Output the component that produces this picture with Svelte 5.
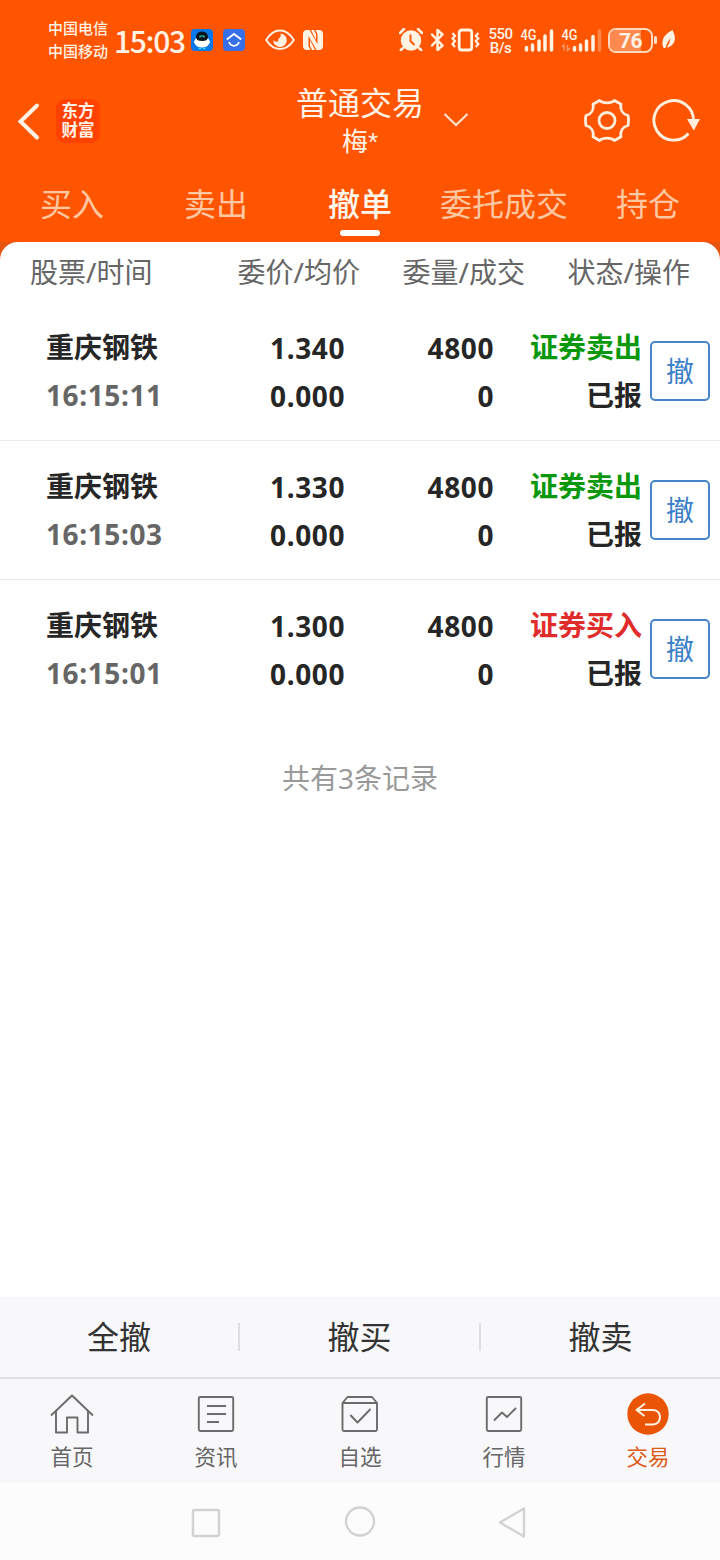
<!--
  Cancel Orders Page

  Pending orders of the trading account, with a cancel button per order
  and the bulk cancel actions above the bottom navigation.
-->

<script lang="ts">
	interface Order {
		name: string;
		time: string;
		price: string;
		average: string;
		amount: number;
		filled: number;
		side: 'buy' | 'sell';
		status: string;
	}

	const tabs = ['买入', '卖出', '撤单', '委托成交', '持仓'];
	const columns = ['股票/时间', '委价/均价', '委量/成交', '状态/操作'];
	const bulkActions = ['全撤', '撤买', '撤卖'];
	const navItems = [
		{ id: 'home', label: '首页' },
		{ id: 'news', label: '资讯' },
		{ id: 'picks', label: '自选' },
		{ id: 'market', label: '行情' },
		{ id: 'trade', label: '交易' }
	];

	let activeTab = $state('撤单');
	let activeNav = $state('trade');
	let orders = $state<Order[]>([
		{ name: '重庆钢铁', time: '16:15:11', price: '1.340', average: '0.000', amount: 4800, filled: 0, side: 'sell', status: '已报' },
		{ name: '重庆钢铁', time: '16:15:03', price: '1.330', average: '0.000', amount: 4800, filled: 0, side: 'sell', status: '已报' },
		{ name: '重庆钢铁', time: '16:15:01', price: '1.300', average: '0.000', amount: 4800, filled: 0, side: 'buy', status: '已报' }
	]);

	function cancel(order: Order) {
		orders = orders.filter((o) => o !== order);
	}
</script>

<div class="page">
	<header>
		<div class="status-bar">
			<div class="carriers"><span>中国电信</span><span>中国移动</span></div>
			<span class="clock">15:03</span>
			<svg class="app-one" width="22" height="22" viewBox="0 0 22 22">
				<rect width="22" height="22" rx="4" fill="#0878e8" />
				<path d="M5 9 2.800 13 4 15Q6 18.500 11 18.500T18 15L19.200 13 17 9Z" fill="#fff" />
				<path d="M5 8.500Q5 2.500 11 2.500T17 8.500Q16.500 12 11 12T5 8.500Z" fill="#08131c" />
				<path d="M9 8.500V7H13V8.500" fill="none" stroke="#35d5c0" stroke-width="1.200" />
				<path d="M7.500 19.500H10.300M11.700 19.500H14.500" stroke="#35d5ef" stroke-width="1.500" />
			</svg>
			<svg class="app-two" width="22" height="22" viewBox="0 0 22 22">
				<rect width="22" height="22" rx="4" fill="#376fe9" />
				<path d="M3.800 10.500 11 5 18.200 10.500M6 13Q7.500 16.800 11 16.800T16 13" fill="none" stroke="#fff" stroke-width="1.800" />
			</svg>
			<svg class="eye" width="30" height="22" viewBox="0 0 30 22">
				<path d="M1.200 11Q7 1.500 15 1.500T28.800 11Q23 20 15 20T1.200 11Z" fill="none" stroke="#fff3e4" stroke-width="2" />
				<path d="M15.500 4.500A6.800 6.800 0 1 1 8.200 11Q10 13.500 12.500 12.500Q14 11.500 13.500 9.500Q16.500 8 15.500 4.500Z" fill="#fff3e4" />
			</svg>
			<svg class="nfc" width="22" height="22" viewBox="0 0 22 22">
				<path d="M5 1H7.500L15.500 15V5L13.500 1H17Q21 1 21 5V17Q21 21 17 21H14.500L6.500 7V17L8.500 21H5Q1 21 1 17V5Q1 1 5 1Z" fill="#fff3e4" />
				<path d="M9 1H12L14 5V11ZM8 11 13 21H10L8 17Z" fill="#fff3e4" />
			</svg>

			<svg class="alarm" width="24" height="24" viewBox="0 0 24 24">
				<circle cx="12" cy="12.500" r="10.200" fill="#fff3e4" />
				<path d="M1 5 5 1M19 1 23 5M4 20 1.800 22M20 20 22.200 22" stroke="#fff3e4" stroke-width="2.500" stroke-linecap="round" />
				<path d="M11.500 6.500V13L15.500 17" fill="none" stroke="#ff5500" stroke-width="1.900" />
			</svg>
			<svg class="bluetooth" width="15" height="24" viewBox="0 0 15 24">
				<path d="M2 6.500 12.500 17.500 7.500 22V2L12.500 6.500 2 17.500" fill="none" stroke="#fff3e4" stroke-width="2.500" stroke-linejoin="round" stroke-linecap="round" />
			</svg>
			<svg class="vibrate" width="29" height="24" viewBox="0 0 29 24">
				<rect x="8.200" y="2" width="12.500" height="20" rx="2.500" fill="none" stroke="#fff3e4" stroke-width="2.800" />
				<path d="M1.500 5 4 8 1.500 10.500 4 13 1.500 16 4 19M27.300 5 24.800 8 27.300 10.500 24.800 13 27.300 16 24.800 19" fill="none" stroke="#fff3e4" stroke-width="2.200" />
			</svg>
			<div class="speed"><span>550</span><span>B/s</span></div>
			<svg class="signal" width="34" height="26" viewBox="0 0 34 26">
				<text x="0.500" y="13" textLength="16" lengthAdjust="spacingAndGlyphs">4G</text>
				<path d="M6.500 23V20.500M12.500 23V18M19 23V14M25 23V9M31.500 23V4" stroke="#fff3e4" stroke-width="3.500" stroke-linecap="round" />
			</svg>
			<svg class="signal signal-two" width="41" height="26" viewBox="0 0 41 26">
				<text x="0.500" y="13" textLength="16" lengthAdjust="spacingAndGlyphs">4G</text>
				<path d="M3 23.500V18L1 20M6.500 18V23.500L9 21" fill="none" stroke="#ff9a66" stroke-width="1.500" />
				<path d="M38.500 23V4" stroke="#ff8848" stroke-width="3.500" stroke-linecap="round" />
				<path d="M13.500 23V20.500M19.500 23V18M25.500 23V14M32 23V9.500" stroke="#fff3e4" stroke-width="3.500" stroke-linecap="round" />
			</svg>
			<div class="battery"><div class="charge" style:width="76%"></div><span>76</span></div>
			<i class="battery-tip"></i>
			<svg class="leaf" width="14" height="20" viewBox="0 0 14 20">
				<path d="M10.500 0Q17 13 6 17.500L5 17Q8 12.500 8.500 8Q5 12 3.500 18L1.500 18Q-3 7 10.500 0Z" fill="#fff3e4" />
			</svg>
		</div>

		<div class="title-bar">
			<div class="title-left">
				<svg width="24" height="40" viewBox="0 0 24 40">
					<path d="M21 4.500 4.500 20.500 21 36.500" fill="none" stroke="#fff3e7" stroke-width="4" stroke-linecap="round" />
				</svg>
				<div class="logo"><span>东方</span><span>财富</span></div>
			</div>
			<div class="title">
				<h1>普通交易</h1>
				<p>梅<span>*</span></p>
			</div>
			<svg class="chevron" width="26" height="16" viewBox="0 0 26 16">
				<path d="M1.500 1 13 12 24.500 1" fill="none" stroke="#ffe7d5" stroke-width="2" />
			</svg>
			<div class="title-right">
				<svg width="46" height="46" viewBox="0 0 46 46" fill="none" stroke="#ffefdf" stroke-width="2.800">
					<path
						d="M15.500 2.500C19 5.700 27 5.700 30.500 2.500L37 6.300C36 11.500 38.500 16 44 17.500Q45 22 44 27.500C38.500 29 36 33.500 37 38.700L30.500 42.500C27 39.300 19 39.300 15.500 42.500L9 38.700C10 33.500 7.500 29 2 27.500Q1 22 2 17.500C7.500 16 10 11.500 9 6.300Z"
						stroke-linejoin="round"
					/>
					<circle cx="23" cy="22.500" r="8" />
				</svg>
				<svg width="48" height="46" viewBox="0 0 48 46">
					<path d="M41.500 22.500A19.800 19.800 0 1 0 36.500 35.500" fill="none" stroke="#ffefdf" stroke-width="2.900" />
					<path d="M35 21H48L41.800 32.500Z" fill="#ffefdf" />
				</svg>
			</div>
		</div>

		<nav class="tabs">
			{#each tabs as tab}
				<button class:active={tab === activeTab} onclick={() => (activeTab = tab)}>{tab}</button>
			{/each}
		</nav>
	</header>

	<main>
		<div class="columns">
			{#each columns as column}
				<span>{column}</span>
			{/each}
		</div>

		{#each orders as order}
			<div class="order">
				<div class="cell name"><span>{order.name}</span><span class="number time">{order.time}</span></div>
				<div class="cell number"><span>{order.price}</span><span>{order.average}</span></div>
				<div class="cell number"><span>{order.amount}</span><span>{order.filled}</span></div>
				<div class="cell">
					<span class={order.side}>{order.side === 'sell' ? '证券卖出' : '证券买入'}</span>
					<span>{order.status}</span>
				</div>
				<button class="cancel" onclick={() => cancel(order)}>撤</button>
			</div>
		{/each}

		<p class="total">共有{orders.length}条记录</p>
	</main>

	<div class="bulk">
		{#each bulkActions as action}
			<button>{action}</button>
		{/each}
	</div>

	<nav class="bottom-nav">
		{#each navItems as item}
			<button class:active={item.id === activeNav} onclick={() => (activeNav = item.id)}>
				<svg width="44" height="44" viewBox="0 0 44 44" fill="none" stroke="#6b6b6b" stroke-width="1.900" stroke-linejoin="round">
					{#if item.id === 'home'}
						<path d="M1 23.500 22 3.500 43 23.500M6 19V40.500H17V25.500H27.500V40.500H38V19" />
					{:else if item.id === 'news'}
						<rect x="4.800" y="5" width="34.400" height="34" rx="1.500" />
						<path d="M13 14H32M13 22H32M13 30H25" />
					{:else if item.id === 'picks'}
						<path d="M4.500 11 9.500 5H34L39 11V37.500Q39 39 37.500 39H6Q4.500 39 4.500 37.500ZM4.500 11H39M12.300 23 19.500 30.500 32.500 17" />
					{:else if item.id === 'market'}
						<rect x="4.800" y="5" width="34.400" height="34" rx="1.500" />
						<path d="M12 28.500 20 20.500 25 25 34 16" />
					{:else}
						<circle cx="22" cy="22" r="20.700" fill="#e95504" stroke="none" />
						<path d="M19 11.500 10.500 18 18.500 24M11 18H27Q34 18.500 34 25.500Q33.500 32 27 32.500H19" stroke="#fff0e0" stroke-width="2.100" />
					{/if}
				</svg>
				<span>{item.label}</span>
			</button>
		{/each}
	</nav>

	<div class="system-nav">
		<svg width="32" height="32" viewBox="0 0 32 32"><rect x="3" y="4" width="26" height="26" rx="1.500" /></svg>
		<svg width="32" height="32" viewBox="0 0 32 32"><circle cx="16" cy="15.500" r="14" /></svg>
		<svg width="32" height="32" viewBox="0 0 32 32"><path d="M2 16.500 26 2.500V30.500Z" /></svg>
	</div>
</div>

<style>
	:global(body) {
		margin: 0;
	}

	.page {
		width: 720px;
		height: 1560px;
		display: flex;
		flex-direction: column;
		background: #e6540e;
		font-family: 'Noto Sans', 'Noto Sans CJK SC', sans-serif;
		color: #262626;
	}

	button {
		padding: 0;
		border: none;
		background: none;
		font-family: inherit;
		color: inherit;
	}

	h1,
	p {
		margin: 0;
		font-weight: 400;
	}

	svg {
		display: block;
		flex: none;
	}

	header {
		height: 242px;
		background: #ff5500;
		color: #fff3e7;
	}

	/* Status bar */
	.status-bar {
		height: 80px;
		display: flex;
		align-items: center;
		padding-left: 48px;
		font-family: 'Noto Sans CJK SC', sans-serif;
	}

	.carriers {
		display: flex;
		flex-direction: column;
		width: 62px;
		padding-bottom: 2px;
		font-size: 15px;
		font-weight: 500;
		line-height: 23px;
	}

	.clock {
		width: 77px;
		margin-left: 4px;
		padding-bottom: 1px;
		font-size: 30px;
		font-weight: 500;
		line-height: 40px;
		letter-spacing: -1.3px;
	}

	.app-two {
		margin-left: 10px;
	}

	.eye {
		margin-left: 20px;
	}

	.nfc {
		margin-left: 7px;
	}

	.alarm {
		margin-left: 75px;
	}

	.bluetooth {
		margin-left: 7px;
	}

	.vibrate {
		margin-left: 6px;
	}

	.speed {
		display: flex;
		flex-direction: column;
		align-items: center;
		width: 25px;
		margin-left: 8px;
		padding-top: 2px;
		font-family: Roboto, sans-serif;
		font-size: 15px;
		font-weight: 500;
		line-height: 14px;
		letter-spacing: -0.5px;
	}

	.signal {
		margin-left: 7px;
		overflow: visible;
	}

	.signal text {
		fill: #fff3e4;
		font-family: Roboto, sans-serif;
		font-size: 15px;
		font-weight: 500;
	}

	.battery {
		position: relative;
		box-sizing: border-box;
		width: 45px;
		height: 25px;
		margin-left: 6px;
		border: 2px solid #ffd9bd;
		border-radius: 8px;
		text-align: center;
		font-family: Roboto, sans-serif;
		font-size: 21px;
		font-weight: 700;
		line-height: 22px;
		letter-spacing: -0.5px;
	}

	.charge {
		position: absolute;
		inset: 0 auto 0 0;
		border-radius: 5px 0 0 5px;
		background: #ff8a50;
	}

	.battery span {
		position: relative;
	}

	.battery-tip {
		width: 3px;
		height: 8px;
		margin-left: 1px;
		border-radius: 2px;
		background: #ffe2cc;
	}

	.leaf {
		margin-left: 5px;
	}

	/* Title bar */
	.title-bar {
		height: 82px;
		display: grid;
		grid-template-columns: 296px 128px 1fr auto;
		align-items: center;
	}

	.title-left {
		display: flex;
		align-items: center;
		gap: 16px;
		padding-left: 16px;
	}

	.logo {
		display: flex;
		flex-direction: column;
		align-items: center;
		width: 44px;
		height: 44px;
		box-sizing: border-box;
		padding-top: 2px;
		border-radius: 9px;
		background: #ff4200;
		font-size: 16.5px;
		font-weight: 700;
		line-height: 19px;
	}

	.title {
		text-align: center;
	}

	h1 {
		font-size: 32px;
		line-height: 40px;
	}

	.title p {
		font-size: 26px;
		line-height: 36px;
	}

	.title p span {
		font-family: 'Liberation Sans', sans-serif;
	}

	.chevron {
		margin-left: 19px;
	}

	.title-right {
		display: flex;
		gap: 22px;
		padding-right: 20px;
	}

	/* Tabs */
	.tabs {
		height: 80px;
		display: grid;
		grid-template-columns: repeat(5, 1fr);
	}

	.tabs button {
		display: flex;
		flex-direction: column;
		align-items: center;
		padding-top: 20px;
		font-size: 32px;
		line-height: 44px;
		color: #ffc8a3;
	}

	.tabs .active {
		font-weight: 500;
		color: #fff7ee;
	}

	.tabs .active::after {
		content: '';
		width: 40px;
		height: 6px;
		margin-top: 4px;
		border-radius: 3px;
		background: #fff;
	}

	/* Order list */
	main {
		flex: 1;
		background: #fff;
		border-radius: 18px 18px 0 0;
	}

	.columns {
		display: flex;
		justify-content: space-between;
		padding: 8px 30px 0;
		height: 52px;
		font-size: 28px;
		line-height: 44px;
		color: #666;
	}

	.columns span:first-child {
		width: 165px;
	}

	.order {
		display: grid;
		grid-template-columns: 183px 116px 149px 148px 60px;
		align-items: center;
		height: 138px;
		padding-left: 46px;
		border-bottom: 1px solid #ebebeb;
	}

	.order:last-of-type {
		border-bottom-color: transparent;
	}

	.cell {
		display: flex;
		flex-direction: column;
		align-items: flex-end;
		font-size: 28px;
		font-weight: 700;
		line-height: 48px;
	}

	.cell.name {
		align-items: flex-start;
	}

	.number {
		padding-top: 2px;
		letter-spacing: 0.6px;
	}

	.time {
		padding-top: 0;
		color: #666;
	}

	.sell {
		color: #0a980b;
	}

	.buy {
		color: #e12c2c;
	}

	.cancel {
		width: 60px;
		height: 60px;
		margin-left: 8px;
		border: 2px solid #4584c8;
		border-radius: 5px;
		font-size: 28px;
		line-height: 54px;
		color: #3c80c8;
	}

	.total {
		padding-top: 37px;
		text-align: center;
		font-size: 28px;
		line-height: 44px;
		color: #999;
	}

	/* Bulk actions */
	.bulk {
		height: 80px;
		display: grid;
		grid-template-columns: 238px 241px 241px;
		align-items: center;
		border-bottom: 2px solid #dedfe1;
		background: #f8f8fa;
	}

	.bulk button {
		height: 28px;
		font-size: 32px;
		line-height: 28px;
		color: #333;
	}

	.bulk button + button {
		border-left: 2px solid #dfdfe1;
	}

	/* Bottom navigation */
	.bottom-nav {
		height: 104px;
		display: grid;
		grid-template-columns: repeat(5, 1fr);
		background: #f8f8fa;
	}

	.bottom-nav button {
		display: flex;
		flex-direction: column;
		align-items: center;
		padding-top: 13px;
		font-size: 21.5px;
		line-height: 32px;
		color: #666;
	}

	.bottom-nav span {
		margin-top: 5px;
	}

	.bottom-nav .active {
		color: #e05a17;
	}

	.system-nav {
		height: 77px;
		display: flex;
		align-items: center;
		justify-content: center;
		gap: 122px;
		background: #fcfcfc;
	}

	.system-nav svg {
		fill: none;
		stroke: #d2d2d2;
		stroke-width: 2.4;
		stroke-linejoin: round;
	}
</style>
